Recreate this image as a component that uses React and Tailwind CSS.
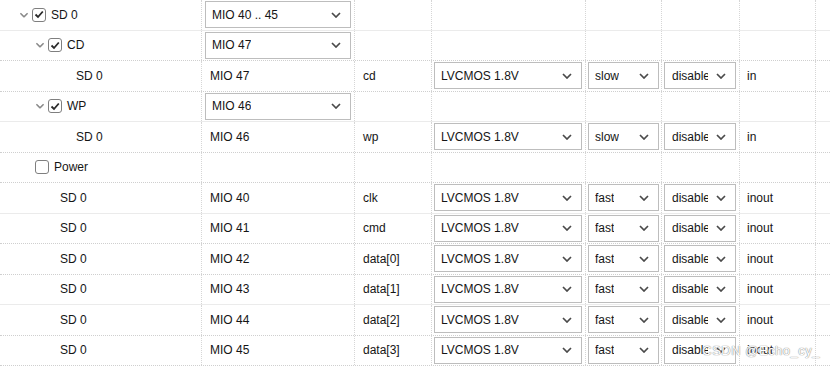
import React from "react";

const COLS = ["w-[202px]", "w-[153px]", "w-[77px]", "w-[154px]", "w-[76px]", "w-[78px]", "w-[76px]", "w-[14px]"];

const rows = [
  { level: 0, tree: true, check: true, label: "SD 0", pin: "MIO 40 .. 45", pinSelect: true, line: "solid" },
  { level: 1, tree: true, check: true, label: "CD", pin: "MIO 47", pinSelect: true },
  { level: 3, label: "SD 0", pin: "MIO 47", signal: "cd", io: "LVCMOS 1.8V", speed: "slow", pull: "disabled", dir: "in" },
  { level: 1, tree: true, check: true, label: "WP", pin: "MIO 46", pinSelect: true, line: "solid" },
  { level: 3, label: "SD 0", pin: "MIO 46", signal: "wp", io: "LVCMOS 1.8V", speed: "slow", pull: "disabled", dir: "in" },
  { level: 1, check: false, label: "Power" },
  { level: 2, label: "SD 0", pin: "MIO 40", signal: "clk", io: "LVCMOS 1.8V", speed: "fast", pull: "disabled", dir: "inout", line: "solid" },
  { level: 2, label: "SD 0", pin: "MIO 41", signal: "cmd", io: "LVCMOS 1.8V", speed: "fast", pull: "disabled", dir: "inout" },
  { level: 2, label: "SD 0", pin: "MIO 42", signal: "data[0]", io: "LVCMOS 1.8V", speed: "fast", pull: "disabled", dir: "inout" },
  { level: 2, label: "SD 0", pin: "MIO 43", signal: "data[1]", io: "LVCMOS 1.8V", speed: "fast", pull: "disabled", dir: "inout", line: "solid" },
  { level: 2, label: "SD 0", pin: "MIO 44", signal: "data[2]", io: "LVCMOS 1.8V", speed: "fast", pull: "disabled", dir: "inout" },
  { level: 2, label: "SD 0", pin: "MIO 45", signal: "data[3]", io: "LVCMOS 1.8V", speed: "fast", pull: "disabled", dir: "inout" },
];

// indentation of the first column, per level
const INDENT = ["pl-[19px]", "pl-[35px]", "pl-[60px]", "pl-[76px]"];

function Chevron({ className }) {
  return (
    <svg width="10" height="6" viewBox="0 0 10 6" className={className}>
      <path d="M1 1 L5 5 L9 1" fill="none" stroke="currentColor" strokeWidth="1.7" />
    </svg>
  );
}

function Checkbox({ checked }) {
  return (
    <span className="w-[14px] h-[14px] rounded-[3px] border border-[#7f7f7f] bg-white flex items-center justify-center shrink-0">
      {checked && (
        <svg width="10" height="9" viewBox="0 0 10 9">
          <path d="M1.5 4.5 L4 7 L8.8 1.5" fill="none" stroke="#2a2a2a" strokeWidth="1.8" />
        </svg>
      )}
    </span>
  );
}

function Select({ value, className = "", clip = false }) {
  return (
    <div className={`h-[27px] bg-white border border-[#bdbdbd] flex items-center pl-[6px] pr-[9px] ${className}`}>
      {clip ? (
        <span className="w-[36px] shrink-0 whitespace-nowrap overflow-hidden">{value}</span>
      ) : (
        <span className="whitespace-nowrap overflow-hidden">{value}</span>
      )}
      <span className="flex-1" />
      <Chevron className="text-[#4a4a4a] shrink-0" />
    </div>
  );
}

function Cell({ col, children, className = "" }) {
  return (
    <div className={`${COLS[col]} shrink-0 h-full border-r border-dotted border-[#d6d6d6] flex items-center ${className}`}>
      {children}
    </div>
  );
}

export default function App() {
  return (
    <div
      className="relative w-[830px] h-[366px] bg-white overflow-hidden text-[12px] text-[#151515]"
      style={{ fontFamily: '"Liberation Sans", Arial, sans-serif' }}
    >
      {rows.map((r, i) => (
        <div
          key={i}
          className={`flex h-[30.5px] border-b ${r.line === "solid" ? "border-solid border-[#ebebeb]" : "border-dotted border-[#cfcfcf]"}`}
        >
          <Cell col={0} className={INDENT[r.level]}>
            {r.tree && <Chevron className="text-[#8a8a8a] mr-[3px] scale-90" />}
            {r.check !== undefined && <span className="mr-[5px]"><Checkbox checked={r.check} /></span>}
            <span>{r.label}</span>
          </Cell>
          <Cell col={1} className="px-[3px]">
            {r.pinSelect ? <Select value={r.pin} className="w-full" /> : <span className="pl-[5px]">{r.pin}</span>}
          </Cell>
          <Cell col={2} className="pl-[8px]">{r.signal}</Cell>
          <Cell col={3} className="pl-[2px] pr-[3px]">
            {r.io && <Select value={r.io} className="w-full" />}
          </Cell>
          <Cell col={4} className="px-[2px]">
            {r.speed && <Select value={r.speed} className="w-full" />}
          </Cell>
          <Cell col={5} className="pl-[2px] pr-[3px]">
            {r.pull && <Select value={r.pull} className="w-full pl-[7px]" clip />}
          </Cell>
          <Cell col={6} className="pl-[7px]">{r.dir}</Cell>
          <Cell col={7} className="border-r-0" />
        </div>
      ))}
      <div className="absolute right-[10px] bottom-[6px] text-[13px] text-white tracking-[0.5px] [text-shadow:0_0_1px_#888,0_0_1px_#888]">
        CSDN @Echo_cy_
      </div>
    </div>
  );
}
